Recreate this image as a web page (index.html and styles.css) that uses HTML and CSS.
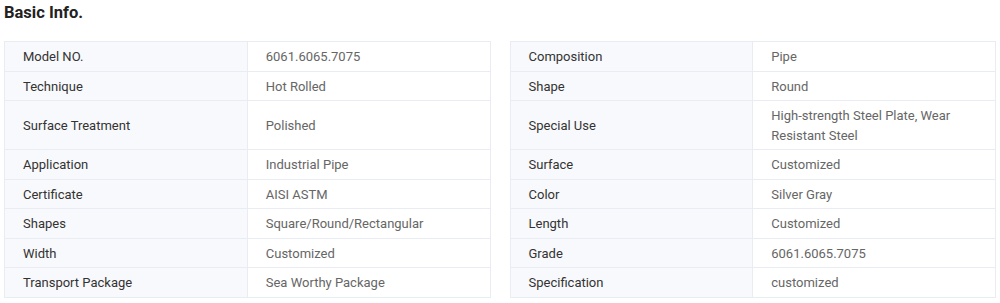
FILE: index.html
```html
<!DOCTYPE html>
<html lang="en">
<head>
    <meta charset="UTF-8">
    <title>Basic Info.</title>
    <link rel="stylesheet" href="styles.css">
</head>
<body>
    <div class="basic-info">
        <h2 class="title">Basic Info.</h2>
        <div class="tables">
            <table class="info-table">
                <tr><th>Model NO.</th><td>6061.6065.7075</td></tr>
                <tr><th>Technique</th><td>Hot Rolled</td></tr>
                <tr class="tall"><th>Surface Treatment</th><td>Polished</td></tr>
                <tr><th>Application</th><td>Industrial Pipe</td></tr>
                <tr><th>Certificate</th><td>AISI ASTM</td></tr>
                <tr><th>Shapes</th><td>Square/Round/Rectangular</td></tr>
                <tr><th>Width</th><td>Customized</td></tr>
                <tr><th>Transport Package</th><td>Sea Worthy Package</td></tr>
            </table>
            <table class="info-table">
                <tr><th>Composition</th><td>Pipe</td></tr>
                <tr><th>Shape</th><td>Round</td></tr>
                <tr class="tall"><th>Special Use</th><td>High-strength Steel Plate, Wear Resistant Steel</td></tr>
                <tr><th>Surface</th><td>Customized</td></tr>
                <tr><th>Color</th><td>Silver Gray</td></tr>
                <tr><th>Length</th><td>Customized</td></tr>
                <tr><th>Grade</th><td>6061.6065.7075</td></tr>
                <tr><th>Specification</th><td>customized</td></tr>
            </table>
        </div>
    </div>
</body>
</html>
```

FILE: styles.css
```css
body {
    margin: 0;
    padding: 0 4px;
    font-family: Roboto, "Liberation Sans", Arial, sans-serif;
    background-color: #fff;
}
.title {
    margin: 0;
    padding-top: 3px;
    height: 38px;
    font-size: 16.5px;
    font-weight: bold;
    color: #222;
    line-height: 19px;
}
.tables {
    display: flex;
    gap: 19px;
    align-items: flex-start;
}
.info-table {
    flex: 1;
    border-collapse: collapse;
    table-layout: fixed;
    font-size: 13px;
}
.info-table th,
.info-table td {
    border: 1px solid #e9edf3;
    padding: 5px 18px 4px 18px;
    line-height: 19.5px;
    text-align: left;
    vertical-align: middle;
    width: 50%;
}
.info-table tr.tall {
    height: 49px;
}
.info-table th {
    font-weight: normal;
    color: #333;
    background-color: #f8f9fc;
}
.info-table td {
    color: #666;
    background-color: #fff;
}
```
